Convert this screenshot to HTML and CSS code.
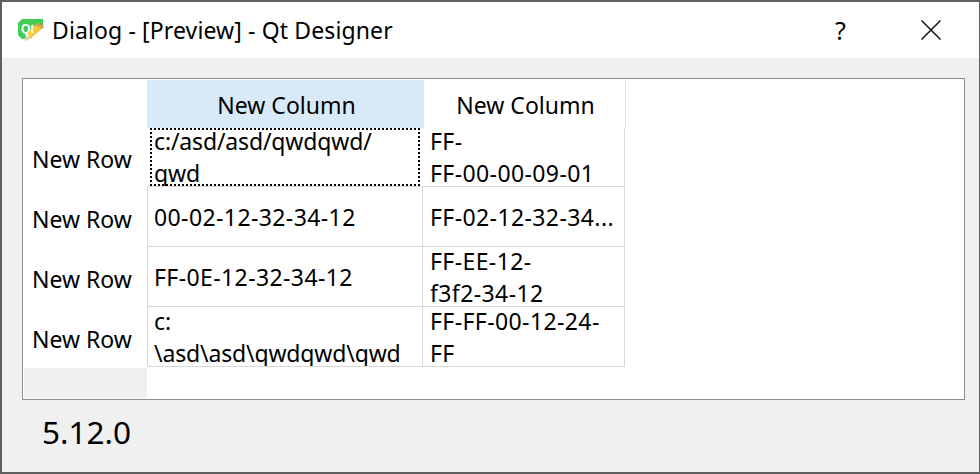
FILE: index.html
```html
<!DOCTYPE html>
<html>
<head>
<meta charset="utf-8">
<title>Dialog - [Preview] - Qt Designer</title>
<link rel="stylesheet" href="styles.css">
</head>
<body>
<div class="window">
  <header class="titlebar">
    <svg class="app-icon" width="28" height="22" viewBox="0 0 28 22">
      <path d="M4 0H25V7L12 20H4L0 16V4Z" fill="#41cd52"/>
      <path d="M20 4L26 8L13 19L7 22L8 15Z" fill="#f6c73a"/>
      <path d="M20 4L26 8L24 10L18 6Z" fill="#e8955a"/>
      <path d="M8 15L13 19L7 22Z" fill="#e9d3b0"/>
      <text x="3" y="14" class="app-icon-text">Qt</text>
    </svg>
    <span class="title">Dialog - [Preview] - Qt Designer</span>
    <span class="help">?</span>
    <svg class="close" width="20" height="20" viewBox="0 0 20 20">
      <path d="M0.5 0.5L19.5 19.5M19.5 0.5L0.5 19.5" stroke="#111" stroke-width="1.5" fill="none"/>
    </svg>
  </header>
  <main class="content">
    <div class="table-frame">
      <div class="table">
        <div class="corner"></div>
        <div class="col-head selected">New Column</div>
        <div class="col-head plain">New Column</div>

        <div class="row-head top">New Row</div>
        <div class="cell first current"><div class="wrap path">c:/asd/asd/qwdqwd/<br>qwd</div></div>
        <div class="cell"><div class="wrap num">FF-<br>FF-00-00-09-01</div></div>

        <div class="row-head">New Row</div>
        <div class="cell first"><div class="single num">00-02-12-32-34-12</div></div>
        <div class="cell"><div class="single num">FF-02-12-32-34...</div></div>

        <div class="row-head">New Row</div>
        <div class="cell first"><div class="single num">FF-0E-12-32-34-12</div></div>
        <div class="cell"><div class="wrap num">FF-EE-12-<br>f3f2-34-12</div></div>

        <div class="row-head">New Row</div>
        <div class="cell first"><div class="wrap path">c:<br>\asd\asd\qwdqwd\qwd</div></div>
        <div class="cell"><div class="wrap num">FF-FF-00-12-24-<br>FF</div></div>

        <div class="row-foot"></div>
      </div>
    </div>
    <div class="version">5.12.0</div>
  </main>
</div>
</body>
</html>
```
FILE: styles.css
```css
* { box-sizing: border-box; }
html, body { margin: 0; padding: 0; }
body {
  width: 980px;
  height: 474px;
  overflow: hidden;
  font-family: "Noto Sans", "Open Sans", sans-serif;
  color: #000;
}
.window {
  width: 980px;
  height: 474px;
  display: flex;
  flex-direction: column;
  border: 2px solid #5f5f5f;
  border-right-width: 1px;
  background: #f0f0f0;
}
.titlebar {
  height: 56px;
  flex: none;
  background: #fff;
  display: flex;
  align-items: center;
  padding-left: 16px;
}
.app-icon { flex: none; margin-right: 7px; }
.app-icon-text { font: bold 12px "Liberation Sans", sans-serif; fill: #fff; }
.title { font-size: 23px; flex: 1; letter-spacing: 0.12px; margin-left: -1px; }
.help { font-size: 25px; width: 86px; }
.close { margin-right: 38px; }
.content {
  flex: 1;
  display: flex;
  flex-direction: column;
  padding: 20px 14px 0 20px;
}
.table-frame {
  height: 322px;
  border: 1px solid #8a8d92;
  background: #fff;
  padding: 1px;
}
.table {
  display: grid;
  grid-template-columns: 123px 276px 202px;
  grid-template-rows: 48px 59px 60px 60px 60px 31px;
  width: 601px;
  font-size: 23px;
}
.corner { background: #fff; }
.col-head {
  display: flex;
  align-items: center;
  justify-content: center;
  padding: 2px 0 0 2px;
}
.col-head.selected { background: #d8e9f7; margin-right: -1px; }
.col-head.plain { border-right: 1px solid #e0e0e0; margin-right: -1px; padding-left: 3px; }
.row-head {
  display: flex;
  align-items: center;
  padding: 3px 0 0 8px;
  background: #fff;
}
.row-head.top { padding-top: 2px; }
.cell {
  position: relative;
  border-right: 1px solid #d8d8d8;
  border-bottom: 1px solid #d8d8d8;
  padding-left: 7px;
  overflow: hidden;
  display: flex;
  align-items: center;
}
.cell.first { border-left: 1px solid #d8d8d8; padding-left: 6px; }
.cell.current { border-color: #fff; border-bottom-color: #d8d8d8; }
.cell.current::after {
  content: "";
  position: absolute;
  inset: 0 2px 0 2px;
  background:
    repeating-linear-gradient(90deg, #000 0 2px, transparent 2px 4px) top / 100% 2px no-repeat,
    repeating-linear-gradient(90deg, #000 0 2px, transparent 2px 4px) bottom / 100% 2px no-repeat,
    repeating-linear-gradient(180deg, #000 0 2px, transparent 2px 4px) left / 2px 100% no-repeat,
    repeating-linear-gradient(180deg, #000 0 2px, transparent 2px 4px) right / 2px 100% no-repeat;
}
.wrap { line-height: 32px; white-space: nowrap; }
.single { white-space: nowrap; padding-top: 1px; }
.num { letter-spacing: 0.4px; }
.path { letter-spacing: -0.15px; }
.row-foot { background: #f0f0f0; margin-top: 1px; }
.version {
  font-size: 31.5px;
  padding: 10px 0 0 20px;
}
```
